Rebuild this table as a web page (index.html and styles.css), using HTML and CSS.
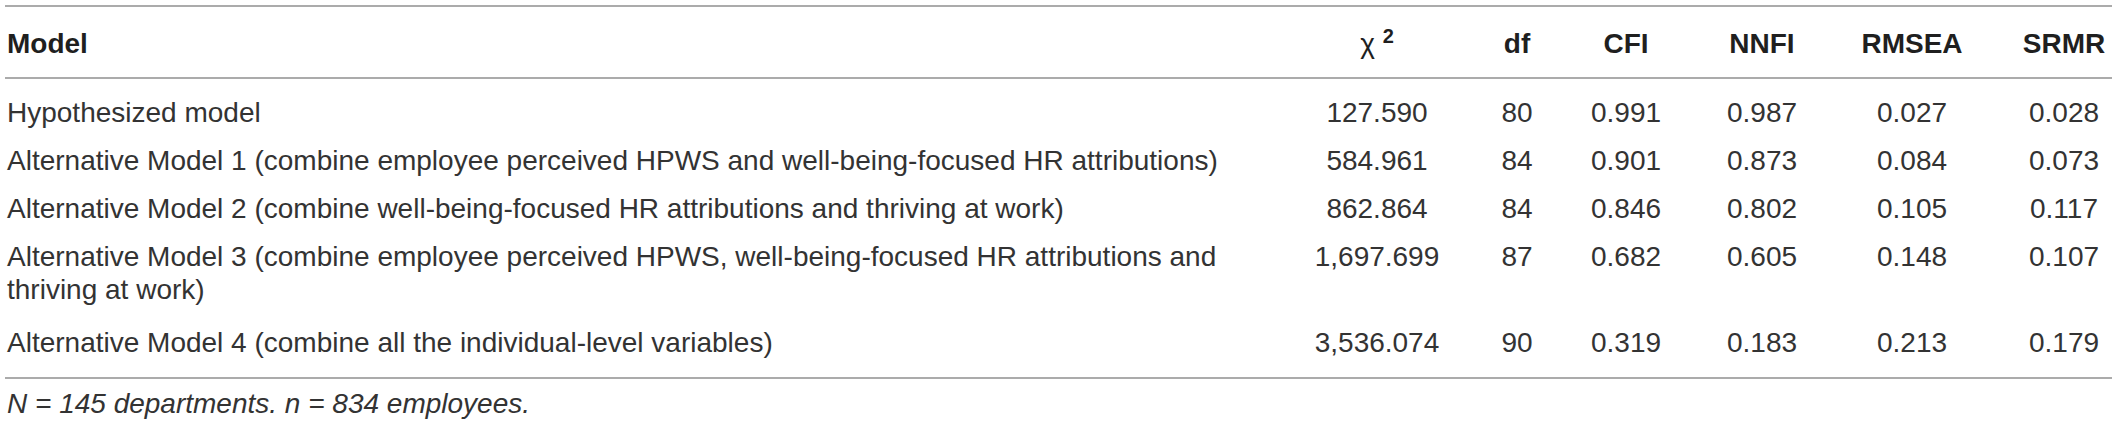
FILE: index.html
```html
<!DOCTYPE html>
<html lang="en">
<head>
<meta charset="utf-8">
<title>Model fit comparison</title>
<link rel="stylesheet" href="styles.css">
</head>
<body>
<table class="fit">
  <colgroup>
    <col class="c-model">
    <col class="c-chi">
    <col class="c-df">
    <col class="c-cfi">
    <col class="c-nnfi">
    <col class="c-rmsea">
    <col class="c-srmr">
  </colgroup>
  <thead>
    <tr>
      <th class="model">Model</th>
      <th><span class="chi">χ</span> <sup>2</sup></th>
      <th>df</th>
      <th>CFI</th>
      <th>NNFI</th>
      <th>RMSEA</th>
      <th>SRMR</th>
    </tr>
  </thead>
  <tbody>
    <tr class="first">
      <td class="model">Hypothesized model</td>
      <td>127.590</td><td>80</td><td>0.991</td><td>0.987</td><td>0.027</td><td>0.028</td>
    </tr>
    <tr>
      <td class="model">Alternative Model 1 (combine employee perceived HPWS and well-being-focused HR attributions)</td>
      <td>584.961</td><td>84</td><td>0.901</td><td>0.873</td><td>0.084</td><td>0.073</td>
    </tr>
    <tr>
      <td class="model">Alternative Model 2 (combine well-being-focused HR attributions and thriving at work)</td>
      <td>862.864</td><td>84</td><td>0.846</td><td>0.802</td><td>0.105</td><td>0.117</td>
    </tr>
    <tr>
      <td class="model">Alternative Model 3 (combine employee perceived HPWS, well-being-focused HR attributions and thriving at work)</td>
      <td>1,697.699</td><td>87</td><td>0.682</td><td>0.605</td><td>0.148</td><td>0.107</td>
    </tr>
    <tr class="last">
      <td class="model">Alternative Model 4 (combine all the individual-level variables)</td>
      <td>3,536.074</td><td>90</td><td>0.319</td><td>0.183</td><td>0.213</td><td>0.179</td>
    </tr>
  </tbody>
</table>
<p class="note">N = 145 departments. n = 834 employees.</p>
</body>
</html>
```

FILE: styles.css
```css
html, body {
  margin: 0;
  padding: 0;
  background: #ffffff;
}

body {
  font-family: "Liberation Sans", Arial, sans-serif;
  font-size: 28px;
  line-height: 33px;
  color: #333333;
}

.fit {
  border-collapse: collapse;
  table-layout: fixed;
  width: 2107px;
  margin: 5px 0 0 5px;
}

.c-model { width: 1251px; }
.c-chi { width: 242px; }
.c-df { width: 38px; }
.c-cfi { width: 180px; }
.c-nnfi { width: 92px; }
.c-rmsea { width: 208px; }
.c-srmr { width: 96px; }

.fit th,
.fit td {
  text-align: center;
  vertical-align: top;
  padding: 8px 0 7px;
  white-space: nowrap;
}

.fit th {
  font-weight: bold;
  color: #1f1f1f;
  padding: 20px 0 17px;
  border-top: 2px solid #ababab;
  border-bottom: 2px solid #ababab;
}

.fit .model {
  text-align: left;
  padding-left: 2px;
  padding-right: 12px;
  white-space: normal;
}

.fit .chi {
  font-weight: normal;
}

.fit sup {
  font-size: 20px;
  line-height: 0;
  vertical-align: 10px;
}

.fit tr.first td {
  padding-top: 17px;
}

.fit tr.last td {
  padding-top: 13px;
  padding-bottom: 18px;
  border-bottom: 2px solid #ababab;
}

.note {
  margin: 8px 0 0 7px;
  font-style: italic;
}
```
